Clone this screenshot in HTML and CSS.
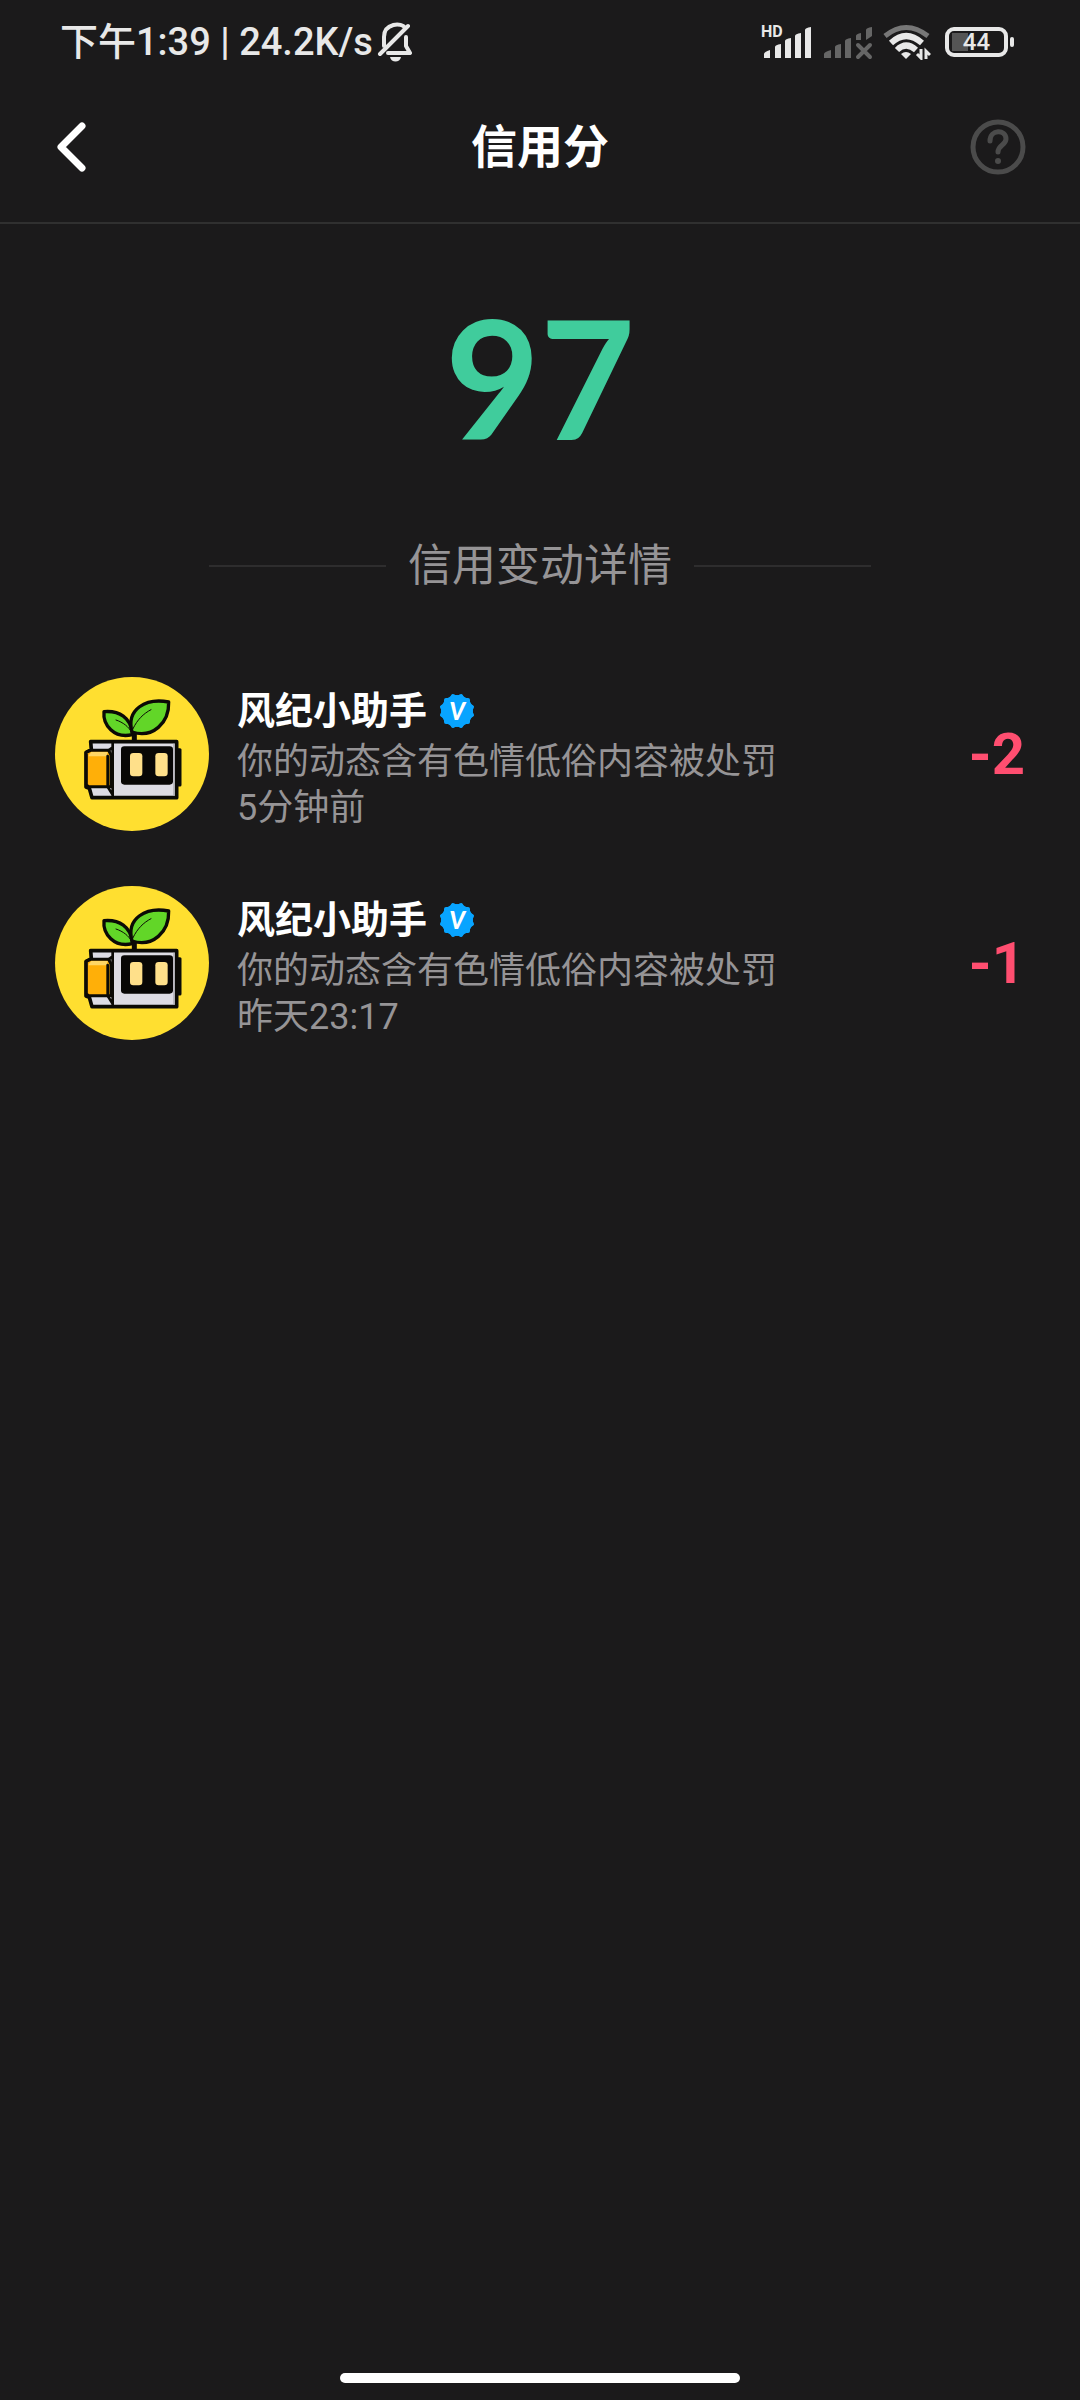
FILE: index.html
```
<!DOCTYPE html>
<html lang="zh-CN">
<head>
    <title>信用分</title>
    <meta charset="UTF-8">
    <meta name="viewport" content="width=device-width, initial-scale=1.0">
    <link rel="stylesheet" href="styles.css">
</head>
<body>
    <!-- shared drawings -->
    <svg class="defs" aria-hidden="true">
        <symbol id="avatar" viewBox="45 50 462 462">
            <circle cx="276" cy="281" r="231" fill="#ffdf30"/>
            <g stroke="#0b0a06" stroke-linejoin="round" stroke-linecap="round">
                <path d="M283 243V212" stroke-width="15"/>
                <path d="M277 218C272 172 238 150 192 154C188 194 222 236 277 223Z" fill="#62d628" stroke-width="10"/>
                <path d="M276 215C258 146 318 112 386 125C388 188 338 235 276 215Z" fill="#62d628" stroke-width="10"/>
                <path d="M228 179C250 186 266 200 273 213M279 205C292 178 310 160 333 148" fill="none" stroke-width="3"/>
                <path d="M411 268H420V374H411Z" fill="#c87945" stroke-width="9"/>
                <path d="M152 244H410V412H156L148 384L138 380V276L154 268Z" fill="#dddce4" stroke-width="11"/>
                <path d="M139 276L152 270H206L213 284V379H146L139 374Z" fill="#ffaf08" stroke-width="9"/>
                <path d="M146 285L154 275H203L200 288H146Z" fill="#ffd665" stroke="none"/>
                <path d="M203 287V375M218 247V408M206 270L217 262M204 381L217 402" fill="none" stroke-width="8"/>
            </g>
            <path d="M402 250V406" stroke="#aaa9b0" stroke-width="4"/>
            <rect x="243" y="258" width="156" height="115" rx="10" fill="#080706"/>
            <rect x="270" y="278" width="37" height="70" rx="10" fill="#ffe08a"/>
            <rect x="346" y="278" width="37" height="70" rx="10" fill="#ffe08a"/>
        </symbol>
        <symbol id="verified" viewBox="-18 -18 36 36">
            <g fill="#08a4ff">
                <circle r="16"/>
                <rect x="-13" y="-13" width="26" height="26" rx="2"/>
                <rect x="-13" y="-13" width="26" height="26" rx="2" transform="rotate(30)"/>
                <rect x="-13" y="-13" width="26" height="26" rx="2" transform="rotate(60)"/>
            </g>
        </symbol>
    </svg>

    <div class="status-bar">
        <span>下午1:39 | 24.2K/s</span>
        <svg class="bell" width="36" height="40" viewBox="0 0 36 40" fill="none" stroke="#e8e8e8" stroke-width="4" stroke-linecap="round" stroke-linejoin="round">
            <path d="M7 24V15C7 1 25 0 28 6M29 15V24L33 31H11M3 32L31 4"/>
            <path d="M13 35H24C23 41 14 41 13 35Z" fill="#e8e8e8" stroke="none"/>
        </svg>
        <div class="status-icons">
            <div class="signal">
                <span class="hd">HD</span>
                <svg width="52" height="36" viewBox="0 0 52 36" fill="#e8e8e8">
                    <path d="M3 34V30Q3 28 9 26V34ZM14 34V23Q14 21 20 20V34ZM24 34V17Q24 15 30 14V34ZM34 34V12Q34 10 40 9V34ZM44 34V6Q44 4 50 3V34Z"/>
                </svg>
            </div>
            <svg width="50" height="36" viewBox="0 0 50 36" fill="#666">
                <path d="M1 34V30Q1 28 8 26V34ZM12 34V23Q12 21 18 20V34ZM22 34V17Q22 15 28 14V34ZM33 16V12Q33 10 38 9V16ZM43 16V6Q43 4 49 3V12Z"/>
                <path d="M35 21L47 33M47 21L35 33" stroke="#666" stroke-width="4" stroke-linecap="round"/>
            </svg>
            <svg width="48" height="36" viewBox="0 0 48 36" fill="none" stroke="#e8e8e8" stroke-width="5">
                <path d="M2 12Q23 -5 45 12" stroke="#777"/>
                <path d="M8 19Q23 5 39 19" stroke-width="6"/>
                <path d="M14 26Q23 17 33 26" stroke-width="6"/>
                <path d="M18 30Q23 26 28 30L23 35Z" fill="#e8e8e8" stroke="none"/>
                <path d="M38 25V34L34 30M43 35V27L47 31" stroke-width="3"/>
            </svg>
            <div class="battery"><span>44</span></div>
        </div>
    </div>

    <header class="nav">
        <button type="button" aria-label="返回">
            <svg width="32" height="52" viewBox="0 0 32 52" fill="none" stroke="#fff" stroke-width="7" stroke-linecap="round" stroke-linejoin="round">
                <path d="M28 5L7 26L28 47"/>
            </svg>
        </button>
        <h1>信用分</h1>
        <button type="button" aria-label="帮助">
            <svg width="56" height="56" viewBox="0 0 56 56" fill="none" stroke="#4b4b4b" stroke-width="5" stroke-linecap="round">
                <circle cx="28" cy="28" r="25"/>
                <path d="M20 22C20 10 36 10 36 20C36 26 28 26 28 33"/>
                <circle cx="28" cy="42" r="3" fill="#4b4b4b" stroke="none"/>
            </svg>
        </button>
    </header>

    <main>
        <div class="score">97</div>
        <h2 class="section-title">信用变动详情</h2>
        <ul class="records">
            <li class="record">
                <svg class="avatar"><use href="#avatar"/></svg>
                <div class="info">
                    <h3>风纪小助手 <span class="verified"><svg><use href="#verified"/></svg><b>V</b></span></h3>
                    <p>你的动态含有色情低俗内容被处罚</p>
                    <p>5分钟前</p>
                </div>
                <div class="change">-2</div>
            </li>
            <li class="record">
                <svg class="avatar"><use href="#avatar"/></svg>
                <div class="info">
                    <h3>风纪小助手 <span class="verified"><svg><use href="#verified"/></svg><b>V</b></span></h3>
                    <p>你的动态含有色情低俗内容被处罚</p>
                    <p>昨天23:17</p>
                </div>
                <div class="change">-1</div>
            </li>
        </ul>
    </main>

    <div class="home-bar"></div>
</body>
</html>
```
FILE: styles.css
```
* { box-sizing: border-box; margin: 0; padding: 0; }
body { display: flex; flex-direction: column; min-height: 100vh; background: #1b1a1b; color: #fff; font-family: Roboto, "Noto Sans CJK SC", sans-serif; }
svg { display: block; flex-shrink: 0; }
button { background: none; border: none; cursor: pointer; }
.defs { position: absolute; width: 0; height: 0; }

.status-bar { display: flex; align-items: flex-start; height: 84px; padding: 22px 66px 0 60px; color: #e8e8e8; font-size: 38px; line-height: 40px; font-weight: 500; }
.bell { margin-left: 4px; }
.status-icons { display: flex; align-items: center; gap: 10px; height: 40px; margin-left: auto; }
.signal { position: relative; }
.hd { position: absolute; left: 0; top: 0; font-size: 16px; line-height: 16px; font-weight: bold; }
.battery { position: relative; width: 63px; height: 30px; border: 4px solid #e8e8e8; border-radius: 9px; background: linear-gradient(#555, #555) 3px 2px / 16px 18px no-repeat; font-size: 24px; line-height: 22px; text-align: center; margin: 0 6px 0 4px; }
.battery::after { content: ""; position: absolute; right: -10px; top: 6px; width: 4px; height: 10px; border-radius: 2px; background: #e8e8e8; }

.nav { display: flex; align-items: center; justify-content: space-between; padding: 32px 54px 44px; border-bottom: 2px solid #303030; }
.nav button { display: flex; width: 56px; height: 62px; align-items: center; }
.nav h1 { font-size: 46px; line-height: 62px; font-weight: bold; }

main { flex: 1; }
.score { margin-top: 58px; font: bold 164px/190px Lato, sans-serif; color: #40cc9c; text-align: center; }
.section-title { display: flex; align-items: center; justify-content: center; gap: 22px; margin-top: 64px; color: #969496; font-size: 44px; line-height: 60px; font-weight: normal; }
.section-title::before, .section-title::after { content: ""; width: 177px; height: 2px; background: #2e2d2e; }

.records { list-style: none; margin-top: 81px; padding: 0 55px; }
.record { display: flex; align-items: center; margin-bottom: 55px; }
.avatar { width: 154px; height: 154px; }
.info { flex: 1; margin-left: 28px; padding-top: 8px; }
.info h3 { display: flex; align-items: center; gap: 12px; margin-bottom: 2px; font-size: 38px; line-height: 52px; font-weight: bold; }
.info p { color: #969496; font-size: 36px; line-height: 46px; }
.verified { position: relative; width: 36px; height: 36px; }
.verified svg { width: 36px; height: 36px; }
.verified b { position: absolute; left: 0; top: 0; width: 36px; font: italic 900 24px/36px Lato, sans-serif; text-align: center; }
.change { color: #ff4e70; font-size: 58px; font-weight: bold; }

.home-bar { width: 37%; height: 10px; margin: 0 auto 17px; border-radius: 5px; background: #fff; }
```
